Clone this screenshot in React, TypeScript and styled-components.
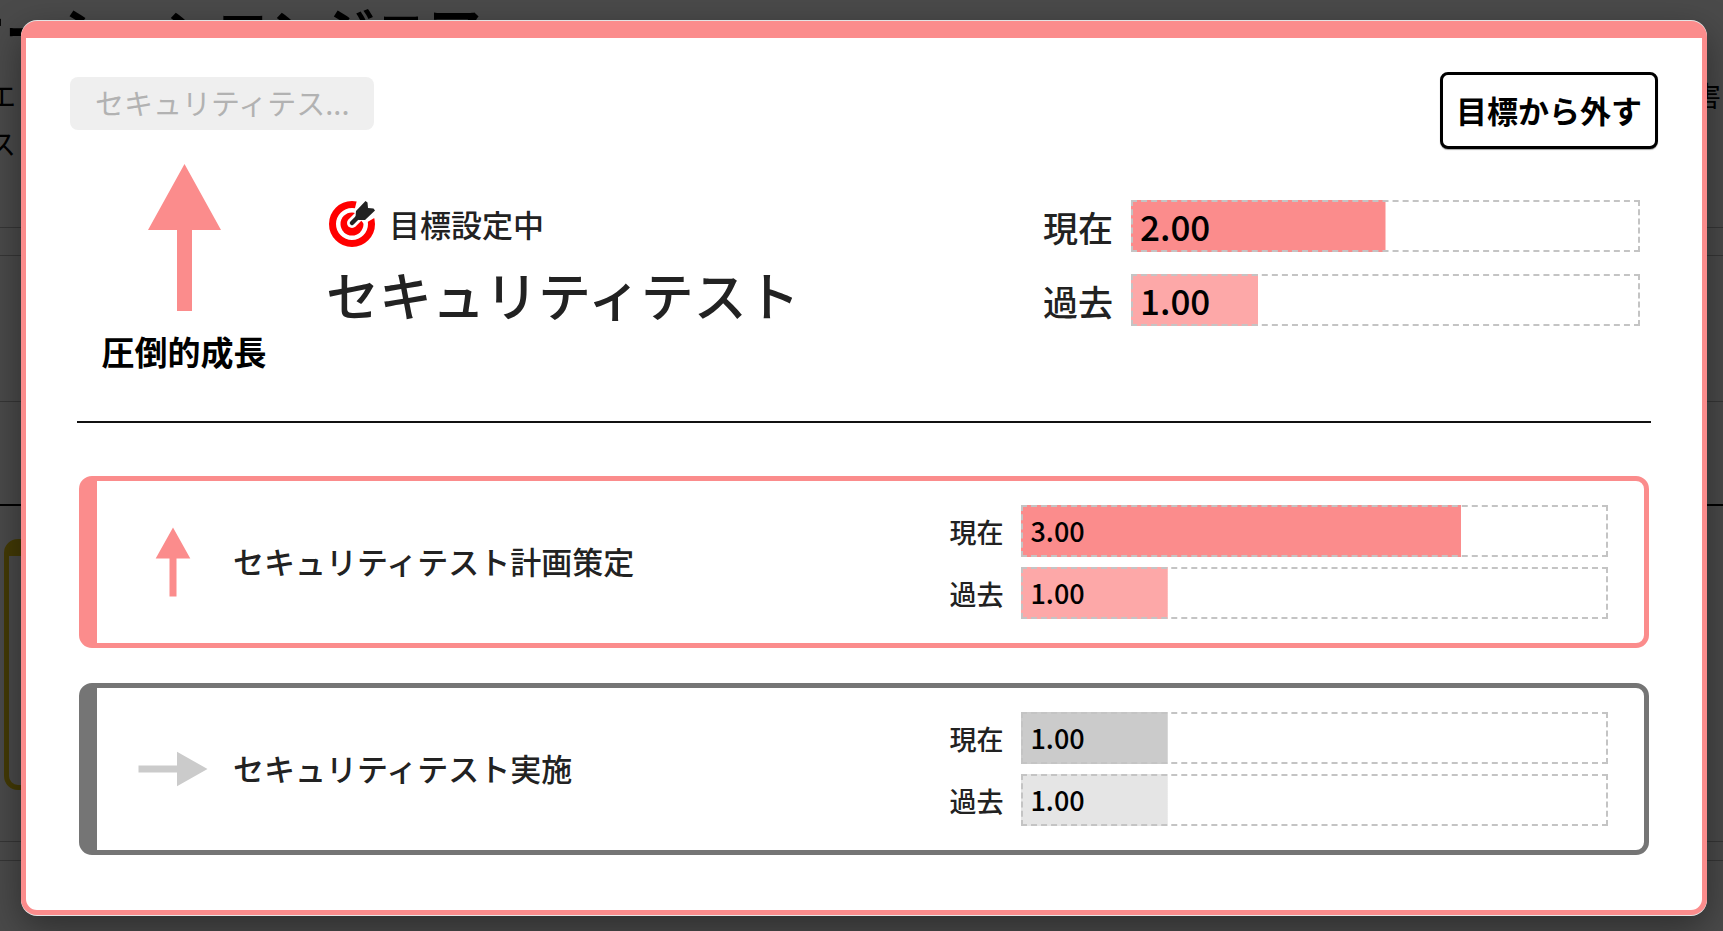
import React from "react";
import styled, { createGlobalStyle } from "styled-components";

const PINK = "#fb8c8c";
const PINK_LIGHT = "#fda8a8";
const GREY = "#cbcbcb";
const GREY_LIGHT = "#e5e5e5";
const GREY_DARK = "#757575";

const GlobalStyle = createGlobalStyle`
  * { box-sizing: border-box; }
  body {
    margin: 0;
    color: #222;
    background: #fff;
    font-family: "Noto Sans CJK JP", sans-serif;
  }
  h1, h2, h3, p, ul { margin: 0; padding: 0; }
`;

const Screen = styled.div`
  position: relative;
  min-height: 100vh;
  overflow: hidden;
`;

/* Page that stays visible around the dialog */
const Backdrop = styled.div`
  position: absolute;
  inset: 0;
  overflow: hidden;
  background: #fff;
`;

const PageTitle = styled.h1`
  margin-left: -48px;
  height: 71px;
  font-size: 53px;
  line-height: 60px;
  font-weight: 700;
  color: #000;
  white-space: nowrap;
`;

const PageLine = styled.p`
  display: flex;
  justify-content: space-between;
  margin: 0 2px 0 -12px;
  font-size: 28px;
  line-height: 48px;
  color: #000;
`;

const PageRule = styled.div<{ $space: number; $strong?: boolean }>`
  height: ${(p) => (p.$strong ? 2 : 1)}px;
  margin-top: ${(p) => p.$space}px;
  background: ${(p) => (p.$strong ? "#000" : "#bbb")};
`;

const PageCard = styled.div`
  height: 251px;
  margin: 33px 24px 0 4px;
  border: 5px solid #e8c814;
  border-top-width: 17px;
  border-radius: 14px;
`;

const Overlay = styled.div`
  position: relative;
  min-height: 100vh;
  padding: 21px 16px 16px 21px;
  background: rgba(0, 0, 0, 0.71);
`;

const Dialog = styled.section`
  padding: 34px 44px 55px;
  background: #fff;
  border: 5px solid ${PINK};
  border-top-width: 17px;
  border-radius: 16px;
  box-shadow: 0 -1px 0 #e4e4e4, 0 1px 0 #e4e4e4, 0 12px 36px rgba(0, 0, 0, 0.4);
`;

const TopRow = styled.header`
  display: flex;
  justify-content: space-between;
  align-items: flex-start;
`;

const Tag = styled.span`
  width: 304px;
  margin-top: 5px;
  padding: 0 25px 3px;
  border-radius: 8px;
  background: #efefef;
  color: #b2b2b2;
  font-size: 29px;
  line-height: 50px;
  white-space: nowrap;
`;

const RemoveButton = styled.button`
  height: 77px;
  padding: 0 13px 2px;
  border: 3px solid #000;
  border-radius: 8px;
  background: #fff;
  box-shadow: 0 1px 1px rgba(0, 0, 0, 0.35);
  color: #000;
  font-family: inherit;
  font-size: 31px;
  font-weight: 600;
  cursor: pointer;
`;

const Summary = styled.div`
  display: grid;
  grid-template-columns: 228px minmax(0, 745fr) minmax(0, 597fr);
  padding: 15px 18px 45px 0;
`;

const Growth = styled.div`
  display: flex;
  flex-direction: column;
  align-items: center;
  gap: 15px;
  color: #000;
  font-size: 33px;
  line-height: 50px;
  font-weight: 600;
`;

const Info = styled.div`
  padding: 36px 0 0 28px;
`;

const Status = styled.p`
  display: flex;
  align-items: center;
  gap: 13px;
  height: 47px;
  padding-left: 2px;
  font-size: 31px;
  font-weight: 500;
`;

const Title = styled.h2`
  margin-top: 12px;
  font-size: 53px;
  line-height: 70px;
  font-weight: 500;
  white-space: nowrap;
`;

const Meters = styled.div<{ $large?: boolean }>`
  display: grid;
  align-content: start;
  gap: ${(p) => (p.$large ? 22 : 10)}px;
  padding-top: ${(p) => (p.$large ? 36 : 0)}px;
  font-size: ${(p) => (p.$large ? 35 : 27)}px;
  font-weight: 500;
`;

const MeterRow = styled.div`
  display: flex;
  align-items: center;
  gap: 18px;
  height: 52px;
  white-space: nowrap;
`;

const Track = styled.div<{ $fill: string; $percent: number }>`
  flex: 1;
  height: 52px;
  padding-left: 7px;
  border: 2px dashed #c4c4c4;
  background: linear-gradient(${(p) => p.$fill}, ${(p) => p.$fill}) 0 0 /
    ${(p) => p.$percent}% 100% no-repeat border-box;
  color: #000;
  line-height: 47px;
`;

const Divider = styled.hr`
  height: 2px;
  margin: 0 7px;
  border: 0;
  background: #111;
`;

const SkillList = styled.ul`
  display: grid;
  gap: 35px;
  margin: 53px 9px 0;
  list-style: none;
`;

const SkillCard = styled.li<{ $color: string }>`
  display: grid;
  grid-template-columns: 95px minmax(0, 717fr) minmax(0, 659fr);
  align-items: center;
  padding: 24px 36px 24px 41px;
  border: 5px solid ${(p) => p.$color};
  border-left-width: 18px;
  border-radius: 13px;
`;

const SkillName = styled.h3`
  padding-bottom: 3px;
  font-size: 31px;
  line-height: 46px;
  font-weight: 500;
  white-space: nowrap;
`;

function BigArrow() {
  return (
    <svg width="73" height="147" viewBox="0 0 73 147" fill={PINK} aria-hidden="true">
      <path d="M36.5 0 73 66H44v81H29V66H0z" />
    </svg>
  );
}

function UpArrow() {
  return (
    <svg width="70" height="70" viewBox="0 0 70 70" fill={PINK} aria-hidden="true">
      <path d="M35 0.500 52.300 31.500H38.500V69.500H31.500V31.500H17.700z" />
    </svg>
  );
}

function RightArrow() {
  return (
    <svg width="70" height="70" viewBox="0 0 70 70" fill={GREY} aria-hidden="true">
      <path d="M69.500 35 39 52.300V38.500H0.500V31.500H39V17.700z" />
    </svg>
  );
}

function TargetIcon() {
  return (
    <svg width="48" height="48" viewBox="0 0 48 48" aria-hidden="true">
      <circle cx="24" cy="24" r="19.500" fill="none" stroke="#f00" strokeWidth="7" />
      <circle cx="24" cy="24" r="11.500" fill="#f00" />
      <path d="M24 23 33 14" stroke="#fff" strokeWidth="10" strokeLinecap="round" />
      <path d="M26 12 29 0H48V17L36 24z" fill="#fff" />
      <path d="M24 23 31 16" stroke="#222" strokeWidth="4.500" strokeLinecap="round" />
      <path
        d="M28 11 37.500 1 39.500 2.500 40 8 45.500 8.500 47 10.500 37 20 30.500 20 27.500 17z"
        fill="#222"
      />
    </svg>
  );
}

type MeterProps = { label: string; value: number; fill: string };

function Meter({ label, value, fill }: MeterProps) {
  return (
    <MeterRow>
      <span>{label}</span>
      <Track
        role="meter"
        aria-label={label}
        aria-valuemin={0}
        aria-valuemax={4}
        aria-valuenow={value}
        $fill={fill}
        $percent={(value / 4) * 100}
      >
        {value.toFixed(2)}
      </Track>
    </MeterRow>
  );
}

export default function App() {
  return (
    <Screen>
      <GlobalStyle />
      <Backdrop>
        <PageTitle>ケーションエンジニア</PageTitle>
        <PageLine>
          <span>エ</span>
          <span>害</span>
        </PageLine>
        <PageLine>ス</PageLine>
        <PageRule $space={60} />
        <PageRule $space={27} />
        <PageRule $space={145} />
        <PageRule $space={102} $strong />
        <PageCard />
        <PageRule $space={51} />
        <PageRule $space={18} />
      </Backdrop>
      <Overlay>
        <Dialog role="dialog" aria-modal="true" aria-labelledby="skill-title">
          <TopRow>
            <Tag>セキュリティテス...</Tag>
            <RemoveButton type="button">目標から外す</RemoveButton>
          </TopRow>
          <Summary>
            <Growth>
              <BigArrow />
              <span>圧倒的成長</span>
            </Growth>
            <Info>
              <Status>
                <TargetIcon />
                目標設定中
              </Status>
              <Title id="skill-title">セキュリティテスト</Title>
            </Info>
            <Meters $large>
              <Meter label="現在" value={2} fill={PINK} />
              <Meter label="過去" value={1} fill={PINK_LIGHT} />
            </Meters>
          </Summary>
          <Divider />
          <SkillList>
            <SkillCard $color={PINK}>
              <UpArrow />
              <SkillName>セキュリティテスト計画策定</SkillName>
              <Meters>
                <Meter label="現在" value={3} fill={PINK} />
                <Meter label="過去" value={1} fill={PINK_LIGHT} />
              </Meters>
            </SkillCard>
            <SkillCard $color={GREY_DARK}>
              <RightArrow />
              <SkillName>セキュリティテスト実施</SkillName>
              <Meters>
                <Meter label="現在" value={1} fill={GREY} />
                <Meter label="過去" value={1} fill={GREY_LIGHT} />
              </Meters>
            </SkillCard>
          </SkillList>
        </Dialog>
      </Overlay>
    </Screen>
  );
}
